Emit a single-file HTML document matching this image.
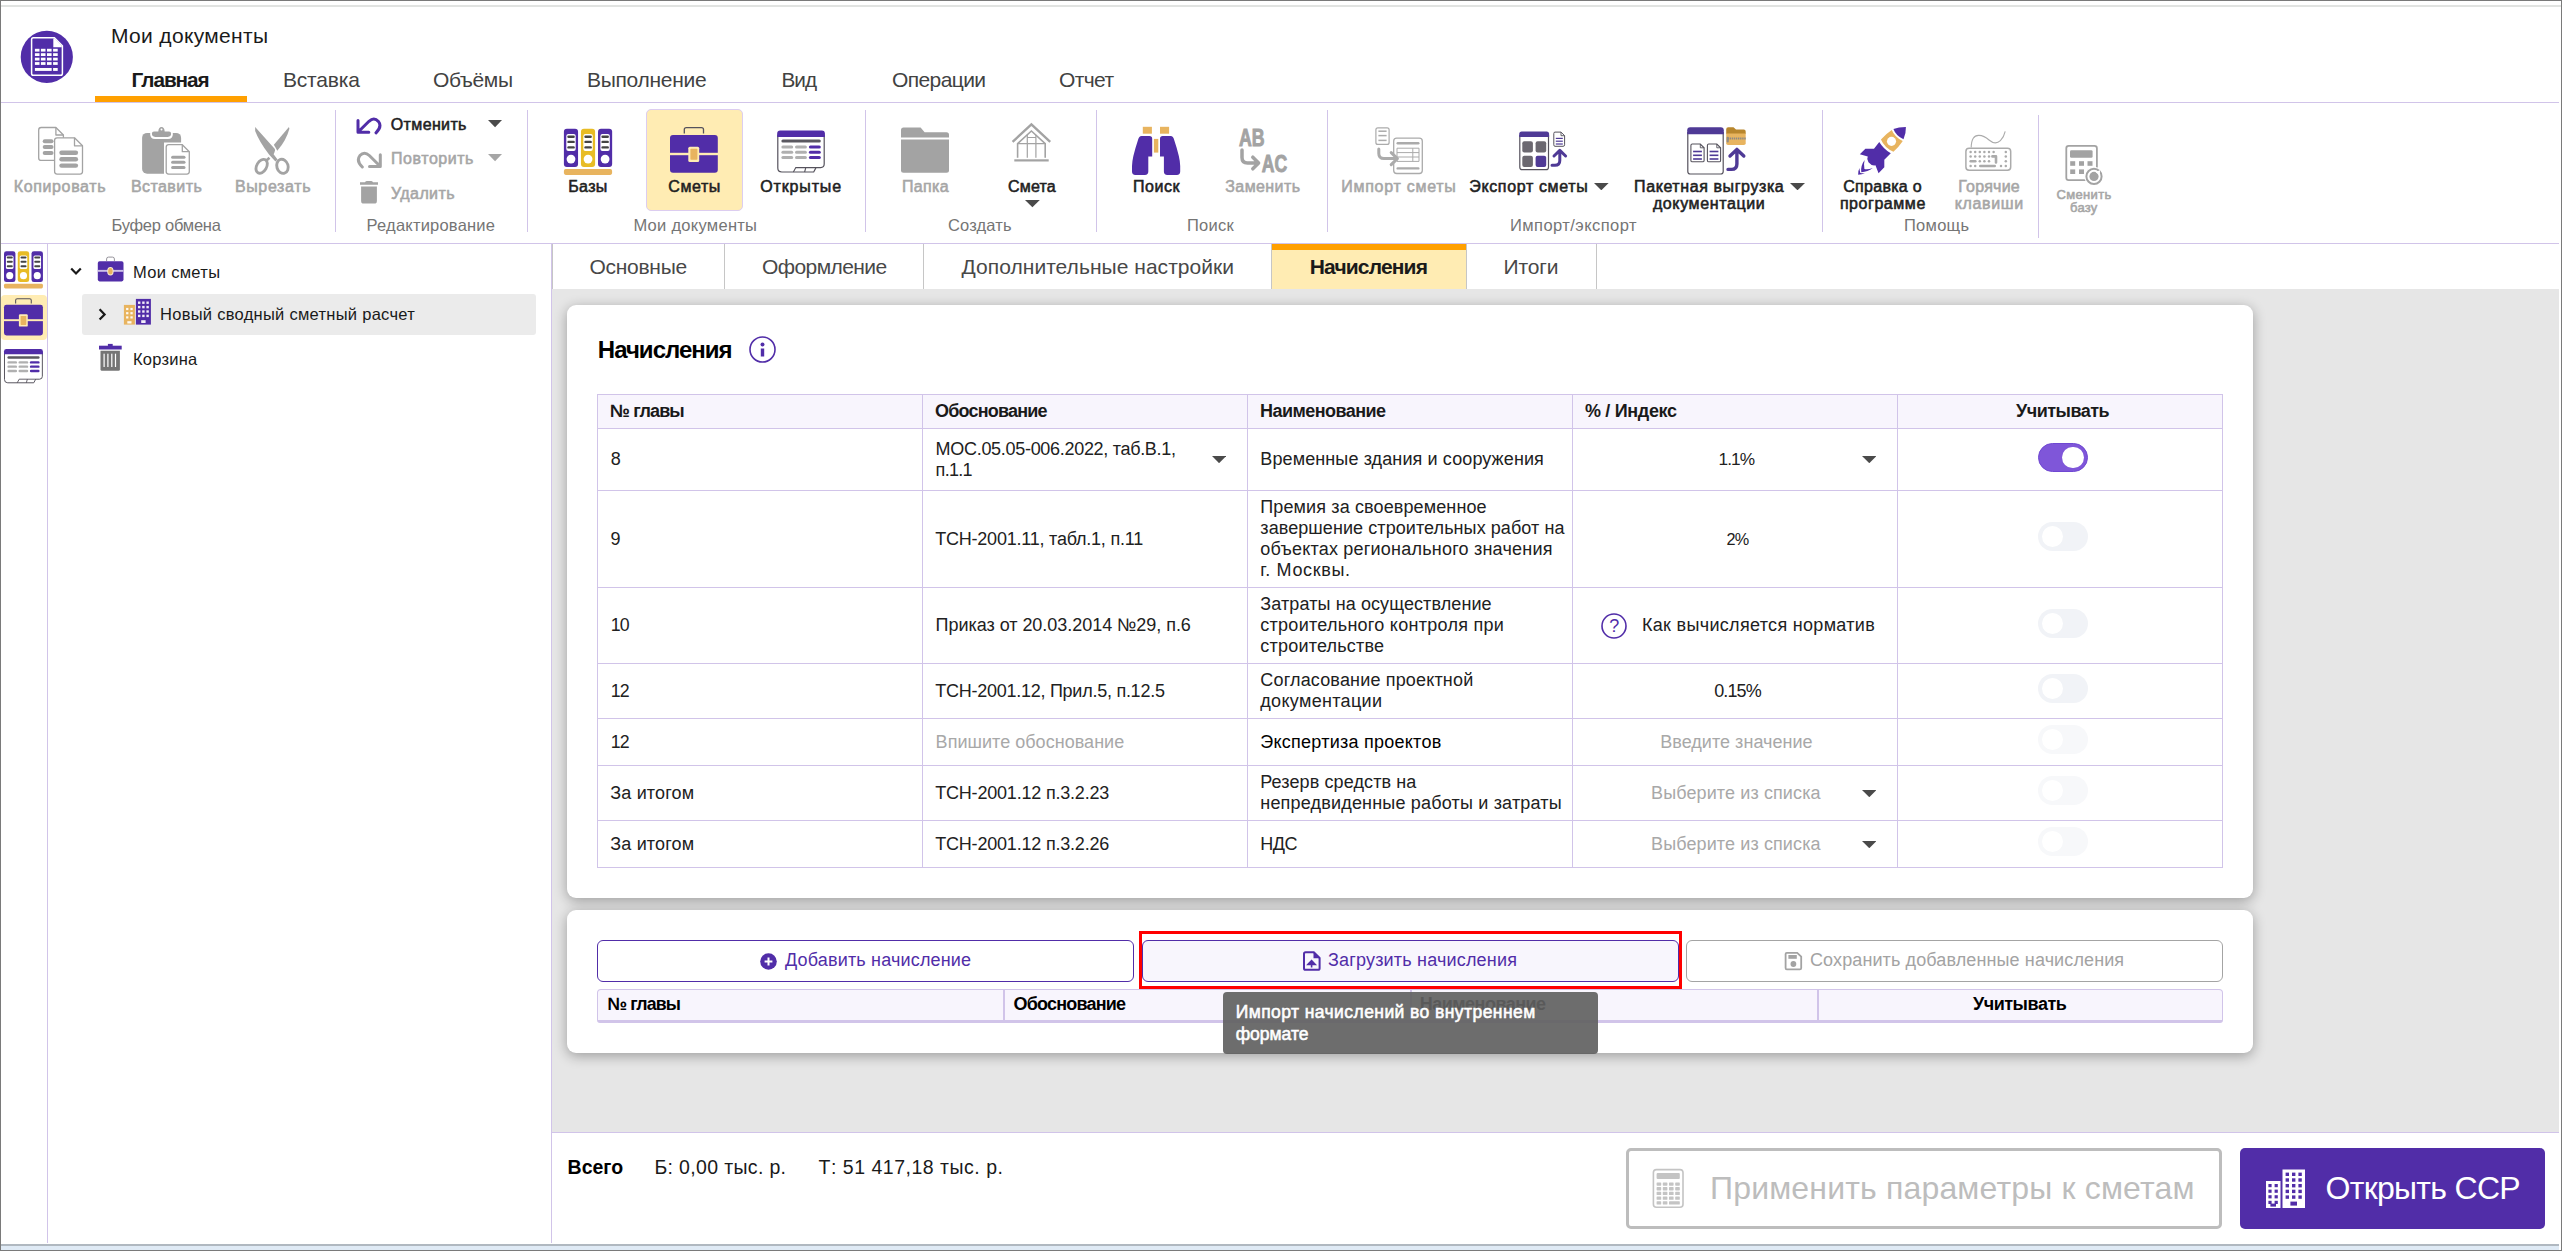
<!DOCTYPE html>
<html><head><meta charset="utf-8"><title>Мои документы</title>
<style>
html,body{margin:0;padding:0;}
body{width:2562px;height:1251px;position:relative;overflow:hidden;background:#fff;font-family:"Liberation Sans",sans-serif;}
.a{position:absolute;box-sizing:border-box;display:block;}
.t{position:absolute;white-space:nowrap;display:block;}
</style></head><body>
<div class="a" style="left:0.00px;top:0.00px;width:2562.00px;height:1251.00px;border:1px solid #7a7a7a;"></div>
<div class="a" style="left:1.00px;top:5.00px;width:2560.00px;height:2.00px;background:#e1e3e1;"></div>
<div class="a" style="left:1.00px;top:1244.00px;width:2558.00px;height:2.00px;background:#b0b8c0;"></div>
<div class="a" style="left:1.00px;top:1246.00px;width:2558.00px;height:4.00px;background:#dfeaf5;"></div>
<span class="t" style="left:111.00px;top:25px;font-size:21.00px;line-height:21.00px;letter-spacing:0.333px;color:#1a1a1a;">Мои документы</span>
<span class="t" style="left:131.60px;top:70px;font-size:20.75px;line-height:20.75px;letter-spacing:-1.050px;color:#1a1a1a;font-weight:bold;">Главная</span>
<div class="a" style="left:95.00px;top:96.00px;width:152.00px;height:6.00px;background:#ffa000;"></div>
<span class="t" style="left:283.00px;top:69px;font-size:21.00px;line-height:21.00px;letter-spacing:-0.208px;color:#424242;">Вставка</span>
<span class="t" style="left:433.00px;top:69px;font-size:21.00px;line-height:21.00px;letter-spacing:-0.400px;color:#424242;">Объёмы</span>
<span class="t" style="left:587.00px;top:69px;font-size:21.00px;line-height:21.00px;letter-spacing:-0.294px;color:#424242;">Выполнение</span>
<span class="t" style="left:781.50px;top:70px;font-size:20.75px;line-height:20.75px;letter-spacing:-1.000px;color:#424242;">Вид</span>
<span class="t" style="left:892.00px;top:69px;font-size:21.00px;line-height:21.00px;letter-spacing:-0.607px;color:#424242;">Операции</span>
<span class="t" style="left:1059.00px;top:69px;font-size:21.00px;line-height:21.00px;letter-spacing:-0.625px;color:#424242;">Отчет</span>
<div class="a" style="left:1.00px;top:102.00px;width:2558.00px;height:1.00px;background:#d1c4e9;"></div>
<div class="a" style="left:1.00px;top:243.00px;width:2558.00px;height:1.00px;background:#d1c4e9;"></div>
<div class="a" style="left:335.00px;top:110.00px;width:1.00px;height:122.00px;background:#d1c4e9;"></div>
<div class="a" style="left:527.00px;top:110.00px;width:1.00px;height:122.00px;background:#d1c4e9;"></div>
<div class="a" style="left:865.00px;top:110.00px;width:1.00px;height:122.00px;background:#d1c4e9;"></div>
<div class="a" style="left:1096.00px;top:110.00px;width:1.00px;height:122.00px;background:#d1c4e9;"></div>
<div class="a" style="left:1327.00px;top:110.00px;width:1.00px;height:122.00px;background:#d1c4e9;"></div>
<div class="a" style="left:1822.00px;top:110.00px;width:1.00px;height:122.00px;background:#d1c4e9;"></div>
<div class="a" style="left:2038.00px;top:115.00px;width:1.00px;height:123.00px;background:#d1c4e9;"></div>
<span class="t" style="left:111.50px;top:217px;font-size:16.50px;line-height:16.50px;letter-spacing:-0.250px;color:#757575;">Буфер обмена</span>
<span class="t" style="left:366.60px;top:217px;font-size:16.50px;line-height:16.50px;letter-spacing:0.204px;color:#757575;">Редактирование</span>
<span class="t" style="left:633.40px;top:217px;font-size:16.50px;line-height:16.50px;letter-spacing:0.279px;color:#757575;">Мои документы</span>
<span class="t" style="left:948.00px;top:217px;font-size:16.50px;line-height:16.50px;letter-spacing:0.158px;color:#757575;">Создать</span>
<span class="t" style="left:1187.00px;top:217px;font-size:16.50px;line-height:16.50px;letter-spacing:0.250px;color:#757575;">Поиск</span>
<span class="t" style="left:1510.00px;top:217px;font-size:16.50px;line-height:16.50px;letter-spacing:0.435px;color:#757575;">Импорт/экспорт</span>
<span class="t" style="left:1904.00px;top:217px;font-size:16.50px;line-height:16.50px;letter-spacing:0.250px;color:#757575;">Помощь</span>
<span class="t" style="left:13.68px;top:179px;font-size:16.00px;line-height:16.00px;letter-spacing:0.644px;color:#a6a6a6;-webkit-text-stroke:0.55px #a6a6a6;">Копировать</span>
<span class="t" style="left:130.88px;top:179px;font-size:16.00px;line-height:16.00px;letter-spacing:0.443px;color:#a6a6a6;-webkit-text-stroke:0.55px #a6a6a6;">Вставить</span>
<span class="t" style="left:234.88px;top:179px;font-size:16.00px;line-height:16.00px;letter-spacing:0.657px;color:#a6a6a6;-webkit-text-stroke:0.55px #a6a6a6;">Вырезать</span>
<span class="t" style="left:568.27px;top:179px;font-size:16.00px;line-height:16.00px;letter-spacing:0.350px;color:#212121;-webkit-text-stroke:0.55px #212121;">Базы</span>
<span class="t" style="left:760.27px;top:179px;font-size:16.00px;line-height:16.00px;letter-spacing:0.850px;color:#212121;-webkit-text-stroke:0.55px #212121;">Открытые</span>
<span class="t" style="left:901.88px;top:179px;font-size:16.00px;line-height:16.00px;letter-spacing:0.338px;color:#a6a6a6;-webkit-text-stroke:0.55px #a6a6a6;">Папка</span>
<span class="t" style="left:1007.98px;top:179px;font-size:16.00px;line-height:16.00px;letter-spacing:0.187px;color:#212121;-webkit-text-stroke:0.55px #212121;">Смета</span>
<span class="t" style="left:1132.88px;top:179px;font-size:16.00px;line-height:16.00px;letter-spacing:0.587px;color:#212121;-webkit-text-stroke:0.55px #212121;">Поиск</span>
<span class="t" style="left:1225.28px;top:179px;font-size:16.00px;line-height:16.00px;letter-spacing:0.407px;color:#a6a6a6;-webkit-text-stroke:0.55px #a6a6a6;">Заменить</span>
<span class="t" style="left:1341.28px;top:179px;font-size:16.00px;line-height:16.00px;letter-spacing:0.723px;color:#a6a6a6;-webkit-text-stroke:0.55px #a6a6a6;">Импорт сметы</span>
<span class="t" style="left:1469.28px;top:179px;font-size:16.00px;line-height:16.00px;letter-spacing:0.642px;color:#212121;-webkit-text-stroke:0.55px #212121;">Экспорт сметы</span>
<span class="t" style="left:1634.08px;top:179px;font-size:16.00px;line-height:16.00px;letter-spacing:0.587px;color:#212121;-webkit-text-stroke:0.55px #212121;">Пакетная выгрузка</span>
<span class="t" style="left:1843.28px;top:179px;font-size:16.00px;line-height:16.00px;letter-spacing:0.281px;color:#212121;-webkit-text-stroke:0.55px #212121;">Справка о</span>
<span class="t" style="left:1958.18px;top:179px;font-size:16.00px;line-height:16.00px;letter-spacing:0.258px;color:#a6a6a6;-webkit-text-stroke:0.55px #a6a6a6;">Горячие</span>
<span class="t" style="left:1652.88px;top:196px;font-size:16.00px;line-height:16.00px;letter-spacing:0.623px;color:#212121;-webkit-text-stroke:0.55px #212121;">документации</span>
<span class="t" style="left:1839.88px;top:196px;font-size:16.00px;line-height:16.00px;letter-spacing:0.556px;color:#212121;-webkit-text-stroke:0.55px #212121;">программе</span>
<span class="t" style="left:1954.78px;top:196px;font-size:16.00px;line-height:16.00px;letter-spacing:0.633px;color:#a6a6a6;-webkit-text-stroke:0.55px #a6a6a6;">клавиши</span>
<span class="t" style="left:2056.47px;top:188px;font-size:13.00px;line-height:13.00px;letter-spacing:0.350px;color:#a6a6a6;-webkit-text-stroke:0.55px #a6a6a6;">Сменить</span>
<span class="t" style="left:2070.08px;top:201px;font-size:13.00px;line-height:13.00px;letter-spacing:0.250px;color:#a6a6a6;-webkit-text-stroke:0.55px #a6a6a6;">базу</span>
<div class="a" style="left:646.00px;top:109.00px;width:97.00px;height:102.00px;background:#ffecb3;border:1px solid #dccdf0;border-radius:5px;"></div>
<span class="t" style="left:668.27px;top:179px;font-size:16.00px;line-height:16.00px;letter-spacing:0.575px;color:#212121;-webkit-text-stroke:0.55px #212121;">Сметы</span>
<span class="t" style="left:390.77px;top:117px;font-size:16.00px;line-height:16.00px;letter-spacing:0.364px;color:#212121;-webkit-text-stroke:0.55px #212121;">Отменить</span>
<span class="t" style="left:391.07px;top:151px;font-size:16.00px;line-height:16.00px;letter-spacing:0.531px;color:#a6a6a6;-webkit-text-stroke:0.55px #a6a6a6;">Повторить</span>
<span class="t" style="left:391.07px;top:186px;font-size:16.00px;line-height:16.00px;letter-spacing:0.392px;color:#a6a6a6;-webkit-text-stroke:0.55px #a6a6a6;">Удалить</span>
<svg class="a" style="left:488.40px;top:120.30px;" width="14.1" height="7.3" viewBox="0 0 14.1 7.3"><path d="M0 0H14.1 L7.05 7.3Z" fill="#4a4a4a"/></svg>
<svg class="a" style="left:488.40px;top:154.30px;" width="14.1" height="7.3" viewBox="0 0 14.1 7.3"><path d="M0 0H14.1 L7.05 7.3Z" fill="#a6a6a6"/></svg>
<svg class="a" style="left:1024.80px;top:200.40px;" width="14.8" height="7.2" viewBox="0 0 14.8 7.2"><path d="M0 0H14.8 L7.4 7.2Z" fill="#4a4a4a"/></svg>
<svg class="a" style="left:1594.00px;top:182.50px;" width="14.6" height="7.3" viewBox="0 0 14.6 7.3"><path d="M0 0H14.6 L7.3 7.3Z" fill="#4a4a4a"/></svg>
<svg class="a" style="left:1790.00px;top:182.50px;" width="15" height="7.3" viewBox="0 0 15 7.3"><path d="M0 0H15 L7.5 7.3Z" fill="#4a4a4a"/></svg>
<div class="a" style="left:47.00px;top:243.00px;width:1.00px;height:1000.00px;background:#d1c4e9;"></div>
<div class="a" style="left:1.00px;top:295.00px;width:46.00px;height:45.00px;background:#ffecb3;border-radius:4px;"></div>
<div class="a" style="left:82.00px;top:294.00px;width:454.00px;height:41.00px;background:#ebebeb;border-radius:3px;"></div>
<span class="t" style="left:133.00px;top:264px;font-size:16.50px;line-height:16.50px;letter-spacing:0.312px;color:#1a1a1a;">Мои сметы</span>
<span class="t" style="left:160.00px;top:306px;font-size:16.50px;line-height:16.50px;letter-spacing:0.276px;color:#1a1a1a;">Новый сводный сметный расчет</span>
<span class="t" style="left:133.00px;top:351px;font-size:16.50px;line-height:16.50px;letter-spacing:0.233px;color:#1a1a1a;">Корзина</span>
<svg class="a" style="left:69.50px;top:267.00px;" width="12" height="9" viewBox="0 0 12 9"><path d="M1.2 1.4L6 6.4L10.8 1.4" fill="none" stroke="#1a1a1a" stroke-width="2.2"/></svg>
<svg class="a" style="left:98.00px;top:308.00px;" width="9" height="13" viewBox="0 0 9 13"><path d="M1.6 1.2L6.6 6.4L1.6 11.6" fill="none" stroke="#1a1a1a" stroke-width="2.2"/></svg>
<div class="a" style="left:551.00px;top:243.00px;width:1.00px;height:1000.00px;background:#d1c4e9;"></div>
<div class="a" style="left:552.00px;top:289.00px;width:2007.00px;height:843.00px;background:#e6e6e6;"></div>
<div class="a" style="left:552.00px;top:244.00px;width:2007.00px;height:45.00px;background:#ffffff;"></div>
<div class="a" style="left:552.00px;top:244.00px;width:1.40px;height:45.00px;background:#c6c6c6;"></div>
<div class="a" style="left:724.00px;top:244.00px;width:1.40px;height:45.00px;background:#c6c6c6;"></div>
<div class="a" style="left:923.00px;top:244.00px;width:1.40px;height:45.00px;background:#c6c6c6;"></div>
<div class="a" style="left:1271.00px;top:244.00px;width:1.40px;height:45.00px;background:#c6c6c6;"></div>
<div class="a" style="left:1466.00px;top:244.00px;width:1.40px;height:45.00px;background:#c6c6c6;"></div>
<div class="a" style="left:1596.00px;top:244.00px;width:1.40px;height:45.00px;background:#c6c6c6;"></div>
<div class="a" style="left:1272.00px;top:244.00px;width:194.00px;height:45.00px;background:#ffecb3;"></div>
<div class="a" style="left:1272.00px;top:244.00px;width:194.00px;height:6.00px;background:#ffa000;"></div>
<span class="t" style="left:589.40px;top:256px;font-size:21.00px;line-height:21.00px;letter-spacing:-0.264px;color:#484848;">Основные</span>
<span class="t" style="left:762.00px;top:256px;font-size:21.00px;line-height:21.00px;letter-spacing:-0.583px;color:#484848;">Оформление</span>
<span class="t" style="left:961.60px;top:256px;font-size:21.00px;line-height:21.00px;letter-spacing:0.039px;color:#484848;">Дополнительные настройки</span>
<span class="t" style="left:1309.80px;top:256px;font-size:21.00px;line-height:21.00px;letter-spacing:-0.839px;color:#1a1a1a;font-weight:bold;">Начисления</span>
<span class="t" style="left:1503.50px;top:256px;font-size:21.00px;line-height:21.00px;letter-spacing:-0.125px;color:#484848;">Итоги</span>
<div class="a" style="left:567.00px;top:305.00px;width:1686.00px;height:593.00px;background:#fff;border-radius:9px;box-shadow:0 3px 13px rgba(0,0,0,.32);"></div>
<span class="t" style="left:597.80px;top:338px;font-size:24.00px;line-height:24.00px;letter-spacing:-0.983px;color:#000;font-weight:bold;">Начисления</span>
<svg class="a" style="left:748.00px;top:335.00px;" width="30" height="30" viewBox="0 0 30 30"><circle cx="14.5" cy="14.5" r="12.5" fill="none" stroke="#512da8" stroke-width="1.6"/><rect x="12.8" y="13.5" width="3.4" height="8" fill="#512da8"/><circle cx="14.5" cy="9.6" r="2" fill="#512da8"/></svg>
<div class="a" style="left:597.00px;top:394.00px;width:1626.00px;height:35.00px;background:#f8f5fd;"></div>
<div class="a" style="left:597.00px;top:394.00px;width:1626.00px;height:1.00px;background:#d1c4e9;"></div>
<div class="a" style="left:597.00px;top:428.00px;width:1626.00px;height:1.00px;background:#d1c4e9;"></div>
<div class="a" style="left:597.00px;top:490.00px;width:1626.00px;height:1.00px;background:#d1c4e9;"></div>
<div class="a" style="left:597.00px;top:587.00px;width:1626.00px;height:1.00px;background:#d1c4e9;"></div>
<div class="a" style="left:597.00px;top:663.00px;width:1626.00px;height:1.00px;background:#d1c4e9;"></div>
<div class="a" style="left:597.00px;top:718.00px;width:1626.00px;height:1.00px;background:#d1c4e9;"></div>
<div class="a" style="left:597.00px;top:765.00px;width:1626.00px;height:1.00px;background:#d1c4e9;"></div>
<div class="a" style="left:597.00px;top:820.00px;width:1626.00px;height:1.00px;background:#d1c4e9;"></div>
<div class="a" style="left:597.00px;top:867.00px;width:1626.00px;height:1.00px;background:#d1c4e9;"></div>
<div class="a" style="left:597.00px;top:394.00px;width:1.00px;height:474.00px;background:#d1c4e9;"></div>
<div class="a" style="left:922.00px;top:394.00px;width:1.00px;height:474.00px;background:#d1c4e9;"></div>
<div class="a" style="left:1247.00px;top:394.00px;width:1.00px;height:474.00px;background:#d1c4e9;"></div>
<div class="a" style="left:1572.00px;top:394.00px;width:1.00px;height:474.00px;background:#d1c4e9;"></div>
<div class="a" style="left:1897.00px;top:394.00px;width:1.00px;height:474.00px;background:#d1c4e9;"></div>
<div class="a" style="left:2222.00px;top:394.00px;width:1.00px;height:474.00px;background:#d1c4e9;"></div>
<span class="t" style="left:610.00px;top:402px;font-size:18.00px;line-height:18.00px;letter-spacing:-0.883px;color:#1a1a1a;font-weight:bold;">№ главы</span>
<span class="t" style="left:935.00px;top:402px;font-size:18.00px;line-height:18.00px;letter-spacing:-0.800px;color:#1a1a1a;font-weight:bold;">Обоснование</span>
<span class="t" style="left:1260.00px;top:402px;font-size:18.00px;line-height:18.00px;letter-spacing:-0.545px;color:#1a1a1a;font-weight:bold;">Наименование</span>
<span class="t" style="left:1585.00px;top:402px;font-size:18.00px;line-height:18.00px;letter-spacing:-0.333px;color:#1a1a1a;font-weight:bold;">% / Индекс</span>
<span class="t" style="left:2016.00px;top:402px;font-size:18.00px;line-height:18.00px;letter-spacing:-0.494px;color:#1a1a1a;font-weight:bold;">Учитывать</span>
<span class="t" style="left:610.70px;top:450px;font-size:18.00px;line-height:18.00px;letter-spacing:-1.400px;color:#212121;">8</span>
<span class="t" style="left:610.50px;top:530px;font-size:18.00px;line-height:18.00px;letter-spacing:-1.000px;color:#212121;">9</span>
<span class="t" style="left:610.80px;top:617px;font-size:17.75px;line-height:17.75px;letter-spacing:-0.950px;color:#212121;">10</span>
<span class="t" style="left:610.80px;top:683px;font-size:17.75px;line-height:17.75px;letter-spacing:-0.950px;color:#212121;">12</span>
<span class="t" style="left:610.80px;top:734px;font-size:17.75px;line-height:17.75px;letter-spacing:-0.950px;color:#212121;">12</span>
<span class="t" style="left:610.30px;top:784px;font-size:18.00px;line-height:18.00px;letter-spacing:0.150px;color:#212121;">За итогом</span>
<span class="t" style="left:610.30px;top:835px;font-size:18.00px;line-height:18.00px;letter-spacing:0.150px;color:#212121;">За итогом</span>
<span class="t" style="left:935.60px;top:440px;font-size:18.00px;line-height:18.00px;letter-spacing:-0.300px;color:#212121;">МОС.05.05-006.2022, таб.В.1,</span>
<span class="t" style="left:935.60px;top:461px;font-size:18.00px;line-height:18.00px;letter-spacing:-0.713px;color:#212121;">п.1.1</span>
<span class="t" style="left:935.20px;top:530px;font-size:18.00px;line-height:18.00px;letter-spacing:-0.219px;color:#212121;">ТСН-2001.11, табл.1, п.11</span>
<span class="t" style="left:935.60px;top:616px;font-size:18.00px;line-height:18.00px;letter-spacing:-0.039px;color:#212121;">Приказ от 20.03.2014 №29, п.6</span>
<span class="t" style="left:935.20px;top:682px;font-size:18.00px;line-height:18.00px;letter-spacing:-0.256px;color:#212121;">ТСН-2001.12, Прил.5, п.12.5</span>
<span class="t" style="left:935.60px;top:733px;font-size:18.00px;line-height:18.00px;letter-spacing:0.033px;color:#a8a8a8;">Впишите обоснование</span>
<span class="t" style="left:935.20px;top:784px;font-size:18.00px;line-height:18.00px;letter-spacing:-0.197px;color:#212121;">ТСН-2001.12 п.3.2.23</span>
<span class="t" style="left:935.20px;top:835px;font-size:18.00px;line-height:18.00px;letter-spacing:-0.197px;color:#212121;">ТСН-2001.12 п.3.2.26</span>
<span class="t" style="left:1260.30px;top:450px;font-size:18.00px;line-height:18.00px;letter-spacing:0.111px;color:#212121;">Временные здания и сооружения</span>
<span class="t" style="left:1260.30px;top:498px;font-size:18.00px;line-height:18.00px;letter-spacing:0.120px;color:#212121;">Премия за своевременное</span>
<span class="t" style="left:1260.30px;top:519px;font-size:18.00px;line-height:18.00px;letter-spacing:0.077px;color:#212121;">завершение строительных работ на</span>
<span class="t" style="left:1260.30px;top:540px;font-size:18.00px;line-height:18.00px;letter-spacing:0.215px;color:#212121;">объектах регионального значения</span>
<span class="t" style="left:1260.30px;top:561px;font-size:18.00px;line-height:18.00px;letter-spacing:0.633px;color:#212121;">г. Москвы.</span>
<span class="t" style="left:1260.30px;top:595px;font-size:18.00px;line-height:18.00px;letter-spacing:0.100px;color:#212121;">Затраты на осуществление</span>
<span class="t" style="left:1260.30px;top:616px;font-size:18.00px;line-height:18.00px;letter-spacing:0.270px;color:#212121;">строительного контроля при</span>
<span class="t" style="left:1260.30px;top:637px;font-size:18.00px;line-height:18.00px;letter-spacing:0.204px;color:#212121;">строительстве</span>
<span class="t" style="left:1260.30px;top:671px;font-size:18.00px;line-height:18.00px;letter-spacing:0.167px;color:#212121;">Согласование проектной</span>
<span class="t" style="left:1260.30px;top:692px;font-size:18.00px;line-height:18.00px;letter-spacing:0.314px;color:#212121;">документации</span>
<span class="t" style="left:1260.30px;top:733px;font-size:18.00px;line-height:18.00px;letter-spacing:0.250px;color:#000;">Экспертиза проектов</span>
<span class="t" style="left:1260.30px;top:773px;font-size:18.00px;line-height:18.00px;letter-spacing:0.106px;color:#212121;">Резерв средств на</span>
<span class="t" style="left:1260.30px;top:794px;font-size:18.00px;line-height:18.00px;letter-spacing:0.183px;color:#212121;">непредвиденные работы и затраты</span>
<span class="t" style="left:1260.30px;top:835px;font-size:18.00px;line-height:18.00px;letter-spacing:-0.525px;color:#212121;">НДС</span>
<span class="t" style="left:1718.50px;top:451px;font-size:17.25px;line-height:17.25px;letter-spacing:-0.883px;color:#212121;">1.1%</span>
<span class="t" style="left:1726.40px;top:531px;font-size:16.25px;line-height:16.25px;letter-spacing:-0.700px;color:#212121;">2%</span>
<span class="t" style="left:1642.00px;top:616px;font-size:18.00px;line-height:18.00px;letter-spacing:0.313px;color:#212121;">Как вычисляется норматив</span>
<span class="t" style="left:1714.20px;top:682px;font-size:18.00px;line-height:18.00px;letter-spacing:-0.875px;color:#212121;">0.15%</span>
<span class="t" style="left:1660.20px;top:733px;font-size:18.00px;line-height:18.00px;letter-spacing:0.043px;color:#a8a8a8;">Введите значение</span>
<span class="t" style="left:1651.10px;top:784px;font-size:18.00px;line-height:18.00px;letter-spacing:0.109px;color:#a8a8a8;">Выберите из списка</span>
<span class="t" style="left:1651.10px;top:835px;font-size:18.00px;line-height:18.00px;letter-spacing:0.109px;color:#a8a8a8;">Выберите из списка</span>
<svg class="a" style="left:1599.50px;top:611.50px;" width="28" height="28" viewBox="0 0 28 28"><circle cx="14" cy="14" r="12" fill="none" stroke="#512da8" stroke-width="1.6"/></svg>
<span class="t" style="left:1609.30px;top:617px;font-size:18.00px;line-height:18.00px;letter-spacing:-1.800px;color:#512da8;">?</span>
<svg class="a" style="left:1212.20px;top:456.00px;" width="14.2" height="7.2" viewBox="0 0 14.2 7.2"><path d="M0 0H14.2 L7.1 7.2Z" fill="#4a4a4a"/></svg>
<svg class="a" style="left:1861.60px;top:456.00px;" width="14.6" height="7.2" viewBox="0 0 14.6 7.2"><path d="M0 0H14.6 L7.3 7.2Z" fill="#4a4a4a"/></svg>
<svg class="a" style="left:1861.60px;top:790.00px;" width="14.6" height="7.2" viewBox="0 0 14.6 7.2"><path d="M0 0H14.6 L7.3 7.2Z" fill="#4a4a4a"/></svg>
<svg class="a" style="left:1861.60px;top:841.00px;" width="14.6" height="7.2" viewBox="0 0 14.6 7.2"><path d="M0 0H14.6 L7.3 7.2Z" fill="#4a4a4a"/></svg>
<div class="a" style="left:2037.90px;top:443.00px;width:50.20px;height:29.00px;background:#7f56d9;border-radius:14.5px;border:1px solid #6f48d2;"></div>
<div class="a" style="left:2062.30px;top:446.70px;width:21.60px;height:21.60px;background:#fff;border-radius:50%;"></div>
<div class="a" style="left:2037.90px;top:522.00px;width:50.30px;height:29.00px;background:#f1f3f7;border-radius:14.5px;"></div>
<div class="a" style="left:2041.60px;top:525.70px;width:21.60px;height:21.60px;background:#fff;border-radius:50%;"></div>
<div class="a" style="left:2037.90px;top:609.00px;width:50.30px;height:29.00px;background:#f1f3f7;border-radius:14.5px;"></div>
<div class="a" style="left:2041.60px;top:612.70px;width:21.60px;height:21.60px;background:#fff;border-radius:50%;"></div>
<div class="a" style="left:2037.90px;top:674.00px;width:50.30px;height:29.00px;background:#f1f3f7;border-radius:14.5px;"></div>
<div class="a" style="left:2041.60px;top:677.70px;width:21.60px;height:21.60px;background:#fff;border-radius:50%;"></div>
<div class="a" style="left:2037.90px;top:725.00px;width:50.30px;height:29.00px;background:#f7f8fa;border-radius:14.5px;"></div>
<div class="a" style="left:2041.60px;top:728.70px;width:21.60px;height:21.60px;background:#fff;border-radius:50%;"></div>
<div class="a" style="left:2037.90px;top:776.00px;width:50.30px;height:29.00px;background:#f7f8fa;border-radius:14.5px;"></div>
<div class="a" style="left:2041.60px;top:779.70px;width:21.60px;height:21.60px;background:#fff;border-radius:50%;"></div>
<div class="a" style="left:2037.90px;top:827.00px;width:50.30px;height:29.00px;background:#f7f8fa;border-radius:14.5px;"></div>
<div class="a" style="left:2041.60px;top:830.70px;width:21.60px;height:21.60px;background:#fff;border-radius:50%;"></div>
<div class="a" style="left:567.00px;top:910.00px;width:1686.00px;height:143.00px;background:#fff;border-radius:9px;box-shadow:0 3px 13px rgba(0,0,0,.32);"></div>
<div class="a" style="left:597.00px;top:940.00px;width:537.00px;height:41.80px;background:#fff;border:1.5px solid #512da8;border-radius:6px;"></div>
<div class="a" style="left:1142.00px;top:940.00px;width:537.00px;height:41.80px;background:#f8f6fd;border:1.5px solid #512da8;border-radius:6px;"></div>
<div class="a" style="left:1686.00px;top:940.00px;width:537.00px;height:41.80px;background:#fff;border:1.2px solid #a4a4a4;border-radius:6px;"></div>
<div class="a" style="left:1138.60px;top:930.60px;width:543.00px;height:58.60px;border:3px solid #f00;"></div>
<span class="t" style="left:785.00px;top:951px;font-size:18.00px;line-height:18.00px;letter-spacing:0.167px;color:#512da8;">Добавить начисление</span>
<span class="t" style="left:1328.00px;top:951px;font-size:18.00px;line-height:18.00px;letter-spacing:0.184px;color:#512da8;">Загрузить начисления</span>
<span class="t" style="left:1810.00px;top:951px;font-size:18.00px;line-height:18.00px;letter-spacing:0.113px;color:#a3a3a3;">Сохранить добавленные начисления</span>
<svg class="a" style="left:760.00px;top:952.50px;" width="17" height="17" viewBox="0 0 17 17"><circle cx="8.5" cy="8.5" r="8.3" fill="#512da8"/><path d="M8.5 4.6V12.4M4.6 8.5H12.4" stroke="#fff" stroke-width="2"/></svg>
<svg class="a" style="left:1302.00px;top:950.00px;" width="20" height="22" viewBox="0 0 20 22"><path d="M3.6 2.2H11.8L17.6 8V18.2Q17.6 19.8 16 19.8H3.6Q2 19.8 2 18.2V3.8Q2 2.2 3.6 2.2Z" fill="none" stroke="#512da8" stroke-width="2" stroke-linejoin="round"/><path d="M11.5 2.4V8.2H17.4Z" fill="#512da8"/><path d="M9.6 17.5V12.2M6 14.4L9.6 10.6L13.2 14.4Z" fill="#512da8" stroke="#512da8" stroke-width="1.6"/></svg>
<svg class="a" style="left:1784.00px;top:951.00px;" width="19" height="20" viewBox="0 0 19 20"><path d="M2.8 1.8H13.2L17.2 5.6V17Q17.2 18.4 15.8 18.4H2.8Q1.6 18.4 1.6 17V3Q1.6 1.8 2.8 1.8Z" fill="none" stroke="#a3a3a3" stroke-width="1.8"/><rect x="4.4" y="4" width="8.4" height="3.8" fill="#a3a3a3"/><circle cx="9.4" cy="13" r="2.9" fill="#a3a3a3"/></svg>
<div class="a" style="left:597.00px;top:989.00px;width:1626.00px;height:33.60px;background:#f8f5fd;border:1px solid #d1c4e9;border-bottom:3px solid #d1c4e9;border-radius:4px 4px 3px 3px;"></div>
<div class="a" style="left:1003.00px;top:990.00px;width:1.50px;height:29.50px;background:#d1c4e9;"></div>
<div class="a" style="left:1410.00px;top:990.00px;width:1.50px;height:29.50px;background:#d1c4e9;"></div>
<div class="a" style="left:1817.00px;top:990.00px;width:1.50px;height:29.50px;background:#d1c4e9;"></div>
<span class="t" style="left:607.40px;top:996px;font-size:17.75px;line-height:17.75px;letter-spacing:-0.900px;color:#000;font-weight:bold;">№ главы</span>
<span class="t" style="left:1013.50px;top:995px;font-size:18.00px;line-height:18.00px;letter-spacing:-0.800px;color:#000;font-weight:bold;">Обоснование</span>
<span class="t" style="left:1419.80px;top:995px;font-size:18.00px;line-height:18.00px;letter-spacing:-0.527px;color:#000;font-weight:bold;">Наименование</span>
<span class="t" style="left:1972.90px;top:995px;font-size:18.00px;line-height:18.00px;letter-spacing:-0.456px;color:#000;font-weight:bold;">Учитывать</span>
<div class="a" style="left:1223.00px;top:992.20px;width:374.70px;height:61.60px;background:rgba(97,97,97,.92);border-radius:4px;"></div>
<span class="t" style="left:1235.68px;top:1004px;font-size:17.50px;line-height:17.50px;letter-spacing:0.427px;color:#fff;-webkit-text-stroke:0.55px #fff;">Импорт начислений во внутреннем</span>
<span class="t" style="left:1235.68px;top:1026px;font-size:17.50px;line-height:17.50px;letter-spacing:-0.000px;color:#fff;-webkit-text-stroke:0.55px #fff;">формате</span>
<div class="a" style="left:552.00px;top:1131.50px;width:2007.00px;height:1.00px;background:#d1c4e9;"></div>
<div class="a" style="left:552.00px;top:1132.50px;width:2007.00px;height:111.50px;background:#fff;"></div>
<span class="t" style="left:567.60px;top:1158px;font-size:19.50px;line-height:19.50px;letter-spacing:-0.025px;color:#000;font-weight:bold;">Всего</span>
<span class="t" style="left:654.40px;top:1158px;font-size:19.50px;line-height:19.50px;letter-spacing:0.346px;color:#1a1a1a;">Б: 0,00 тыс. р.</span>
<span class="t" style="left:818.60px;top:1158px;font-size:19.50px;line-height:19.50px;letter-spacing:0.508px;color:#1a1a1a;">Т: 51 417,18 тыс. р.</span>
<div class="a" style="left:1626.00px;top:1148.00px;width:596.00px;height:81.00px;background:#fff;border:3px solid #bdbdbd;border-radius:5px;"></div>
<span class="t" style="left:1710.00px;top:1172px;font-size:32.00px;line-height:32.00px;letter-spacing:0.172px;color:#bdbdbd;">Применить параметры к сметам</span>
<div class="a" style="left:2240.00px;top:1148.00px;width:305.00px;height:81.00px;background:#512da8;border-radius:5px;"></div>
<span class="t" style="left:2325.50px;top:1172px;font-size:32.00px;line-height:32.00px;letter-spacing:-0.695px;color:#fff;">Открыть ССР</span>
<svg class="a" style="left:18.00px;top:28.00px;" width="58" height="58" viewBox="18 28 58 58"><circle cx="46.8" cy="56.9" r="26.1" fill="#512da8"/><path d="M33.3 37.8H54.4L62.4 45.8V73.4Q62.4 75.2 60.6 75.2H33.3Q31.6 75.2 31.6 73.4V39.6Q31.6 37.8 33.3 37.8Z" fill="none" stroke="#fff" stroke-width="1.5"/><path d="M53.3 38.6V47.3H61.8L61.8 45.9L54.5 38.6Z" fill="#fff"/><rect x="34.9" y="48.8" width="4.6" height="2.8" fill="#fff"/><rect x="40.9" y="48.8" width="4.6" height="2.8" fill="#fff"/><rect x="47" y="48.8" width="4.6" height="2.8" fill="#fff"/><rect x="53.1" y="48.8" width="4.6" height="2.8" fill="#fff"/><rect x="34.9" y="53.2" width="4.6" height="2.8" fill="#fff"/><rect x="40.9" y="53.2" width="4.6" height="2.8" fill="#fff"/><rect x="47" y="53.2" width="4.6" height="2.8" fill="#fff"/><rect x="53.1" y="53.2" width="4.6" height="2.8" fill="#fff"/><rect x="34.9" y="57.7" width="4.6" height="2.8" fill="#fff"/><rect x="40.9" y="57.7" width="4.6" height="2.8" fill="#fff"/><rect x="47" y="57.7" width="4.6" height="2.8" fill="#fff"/><rect x="53.1" y="57.7" width="4.6" height="2.8" fill="#fff"/><rect x="34.9" y="62.1" width="4.6" height="2.8" fill="#fff"/><rect x="40.9" y="62.1" width="4.6" height="2.8" fill="#fff"/><rect x="47" y="62.1" width="4.6" height="2.8" fill="#fff"/><rect x="53.1" y="62.1" width="4.6" height="2.8" fill="#fff"/><rect x="34.9" y="68" width="16.8" height="2.9" fill="#fff"/><rect x="53.1" y="68" width="4.6" height="2.9" fill="#fff"/></svg>
<svg class="a" style="left:36.00px;top:125.00px;" width="50" height="52" viewBox="36 125 50 52"><path d="M41.2 127.5H55.9L63.4 135V157.9Q63.4 160.4 60.9 160.4H41.2Q38.7 160.4 38.7 157.9V130Q38.7 127.5 41.2 127.5Z" fill="#fff" stroke="#a3a3a3" stroke-width="1.3" stroke-linejoin="round"/><path d="M55.9 127.5V135H63.4" fill="none" stroke="#a3a3a3" stroke-width="1.3" stroke-linejoin="round"/><rect x="42.7" y="139.2" width="10.8" height="4" rx="2" fill="#a3a3a3"/><rect x="42.7" y="145.1" width="10.8" height="4" rx="2" fill="#a3a3a3"/><rect x="42.7" y="151.1" width="10.8" height="4" rx="2" fill="#a3a3a3"/><path d="M57.1 137.8H74.5L82.5 145.8V171.6Q82.5 174.1 80 174.1H57.1Q54.6 174.1 54.6 171.6V140.3Q54.6 137.8 57.1 137.8Z" fill="#fff" stroke="#a3a3a3" stroke-width="1.3" stroke-linejoin="round"/><path d="M74.5 137.8V145.8H82.5" fill="none" stroke="#a3a3a3" stroke-width="1.3" stroke-linejoin="round"/><rect x="59.3" y="150.6" width="18.8" height="4.4" rx="2.2" fill="#a3a3a3"/><rect x="59.3" y="157" width="18.8" height="4.4" rx="2.2" fill="#a3a3a3"/><rect x="59.3" y="163.4" width="18.8" height="4.4" rx="2.2" fill="#a3a3a3"/></svg>
<svg class="a" style="left:140.00px;top:125.00px;" width="52" height="52" viewBox="140 125 52 52"><rect x="142.1" y="132.9" width="39" height="40.8" rx="5" fill="#a3a3a3"/><path d="M150.2 132.5H172.8V134.2Q172.8 139 168 139H155Q150.2 139 150.2 134.2Z" fill="#fff"/><path d="M154 131.5H158.3Q158.6 126.9 161.5 126.9Q164.4 126.9 164.7 131.5H169Q171.1 131.5 171.1 133.6Q171.1 136.9 167.8 136.9H155.2Q151.9 136.9 151.9 133.6Q151.9 131.5 154 131.5Z" fill="#a3a3a3"/><circle cx="161.5" cy="129.6" r="1" fill="#fff"/><rect x="164" y="142.5" width="28" height="34" fill="#fff"/><path d="M168.7 144.7H182.3L189.3 151.7V171.6Q189.3 174.1 186.8 174.1H168.7Q166.2 174.1 166.2 171.6V147.2Q166.2 144.7 168.7 144.7Z" fill="#fff" stroke="#a3a3a3" stroke-width="1.3" stroke-linejoin="round"/><path d="M182.3 144.7V151.7H189.3" fill="none" stroke="#a3a3a3" stroke-width="1.3" stroke-linejoin="round"/><rect x="171.1" y="155.7" width="14.4" height="3" rx="1.5" fill="#a3a3a3"/><rect x="171.1" y="160.8" width="14.4" height="3" rx="1.5" fill="#a3a3a3"/><rect x="171.1" y="166" width="14.4" height="3" rx="1.5" fill="#a3a3a3"/></svg>
<svg class="a" style="left:250.00px;top:124.00px;" width="46" height="54" viewBox="250 124 46 54"><g transform="translate(248 122) scale(0.044763)"><path d="M160 110L600 605Q612 640 590 680L572 720L660 835L612 885L470 725Q250 440 160 200Z" fill="#a3a3a3"/><path d="M915 110L578 508L655 642Q860 400 925 150Z" fill="#a3a3a3"/><path d="M395 875L480 800" stroke="#a3a3a3" stroke-width="58" fill="none"/><ellipse cx="305" cy="990" rx="110" ry="168" transform="rotate(30 305 990)" fill="none" stroke="#a3a3a3" stroke-width="64"/><ellipse cx="770" cy="990" rx="126" ry="160" transform="rotate(-17 770 990)" fill="none" stroke="#a3a3a3" stroke-width="64"/></g></svg>
<svg class="a" style="left:354.00px;top:115.00px;" width="30" height="21" viewBox="354 115 30 21"><path d="M358 120.6V132.2H368.8M358.4 131.8L369 121.3Q374 116.6 378.4 121.4Q382.4 126.6 376 132.8" fill="none" stroke="#512da8" stroke-width="3" stroke-linecap="round" stroke-linejoin="round"/></svg>
<svg class="a" style="left:354.00px;top:149.00px;" width="30" height="21" viewBox="354 149 30 21"><path d="M380.3 154.8V166.4H369.5M379.9 166L369.3 155.5Q364.3 150.8 359.9 155.6Q355.9 160.8 362.3 167" fill="none" stroke="#a3a3a3" stroke-width="3" stroke-linecap="round" stroke-linejoin="round"/></svg>
<svg class="a" style="left:358.00px;top:179.00px;" width="22" height="27" viewBox="358 179 22 27"><path d="M360 182.3H365Q365.6 181 367 181H371Q372.4 181 373 182.3H378V184.7H360Z" fill="#a3a3a3"/><path d="M361.1 186.4H376.9V201Q376.9 203.6 374.3 203.6H363.7Q361.1 203.6 361.1 201Z" fill="#a3a3a3"/></svg>
<svg class="a" style="left:562.00px;top:127.00px;" width="52" height="50" viewBox="562 127 52 50"><rect x="563.9" y="128.8" width="14.15" height="38.3" rx="3" fill="#512da8"/><rect x="566.3" y="134" width="9.4" height="17" rx="2" fill="#fff"/><rect x="567.3" y="135.5" width="7.5" height="2.4" rx="1.2" fill="#444"/><rect x="567.3" y="140.7" width="7.5" height="2.4" rx="1.2" fill="#444"/><rect x="567.3" y="146.2" width="7.5" height="2.4" rx="1.2" fill="#444"/><circle cx="571" cy="159.1" r="4.4" fill="#fff"/><rect x="580.95" y="128.8" width="14.15" height="38.3" rx="3" fill="#e8bc25"/><rect x="583.35" y="134" width="9.4" height="17" rx="2" fill="#fff"/><rect x="584.35" y="135.5" width="7.5" height="2.4" rx="1.2" fill="#444"/><rect x="584.35" y="140.7" width="7.5" height="2.4" rx="1.2" fill="#444"/><rect x="584.35" y="146.2" width="7.5" height="2.4" rx="1.2" fill="#444"/><circle cx="588.05" cy="159.1" r="4.4" fill="#fff"/><rect x="598" y="128.8" width="14.15" height="38.3" rx="3" fill="#512da8"/><rect x="600.4" y="134" width="9.4" height="17" rx="2" fill="#fff"/><rect x="601.4" y="135.5" width="7.5" height="2.4" rx="1.2" fill="#444"/><rect x="601.4" y="140.7" width="7.5" height="2.4" rx="1.2" fill="#444"/><rect x="601.4" y="146.2" width="7.5" height="2.4" rx="1.2" fill="#444"/><circle cx="605.1" cy="159.1" r="4.4" fill="#fff"/><rect x="563.9" y="169.1" width="48.2" height="5.8" rx="1.8" fill="#e8b45f"/></svg>
<svg class="a" style="left:2.00px;top:249.00px;" width="44" height="43" viewBox="2 249 44 43"><rect x="4" y="251.2" width="11.4191" height="30.9081" rx="2.421" fill="#512da8"/><rect x="5.9368" y="255.396" width="7.5858" height="13.719" rx="1.614" fill="#fff"/><rect x="6.7438" y="256.607" width="6.0525" height="1.9368" rx="0.9684" fill="#444"/><rect x="6.7438" y="260.803" width="6.0525" height="1.9368" rx="0.9684" fill="#444"/><rect x="6.7438" y="265.242" width="6.0525" height="1.9368" rx="0.9684" fill="#444"/><circle cx="9.7297" cy="275.652" r="3.5508" fill="#fff"/><rect x="17.7594" y="251.2" width="11.4191" height="30.9081" rx="2.421" fill="#e8bc25"/><rect x="19.6962" y="255.396" width="7.5858" height="13.719" rx="1.614" fill="#fff"/><rect x="20.5032" y="256.607" width="6.0525" height="1.9368" rx="0.9684" fill="#444"/><rect x="20.5032" y="260.803" width="6.0525" height="1.9368" rx="0.9684" fill="#444"/><rect x="20.5032" y="265.242" width="6.0525" height="1.9368" rx="0.9684" fill="#444"/><circle cx="23.4891" cy="275.652" r="3.5508" fill="#fff"/><rect x="31.5187" y="251.2" width="11.4191" height="30.9081" rx="2.421" fill="#512da8"/><rect x="33.4555" y="255.396" width="7.5858" height="13.719" rx="1.614" fill="#fff"/><rect x="34.2625" y="256.607" width="6.0525" height="1.9368" rx="0.9684" fill="#444"/><rect x="34.2625" y="260.803" width="6.0525" height="1.9368" rx="0.9684" fill="#444"/><rect x="34.2625" y="265.242" width="6.0525" height="1.9368" rx="0.9684" fill="#444"/><circle cx="37.2484" cy="275.652" r="3.5508" fill="#fff"/><rect x="4" y="283.722" width="38.8974" height="4.6806" rx="1.4526" fill="#e8b45f"/></svg>
<svg class="a" style="left:668.00px;top:125.00px;" width="52" height="50" viewBox="668 125 52 50"><path d="M684.3 133.5V129.6Q684.3 127.6 686.3 127.6H701.5Q703.5 127.6 703.5 129.6V133.5" fill="none" stroke="#55525c" stroke-width="1.3"/><rect x="670" y="135" width="47.8" height="37.8" rx="3" fill="#512da8"/><rect x="669" y="152.8" width="49.8" height="2.4" fill="#ffecb3"/><rect x="688.3" y="146.7" width="10.9" height="15.2" rx="1.5" fill="#ffecb3"/><rect x="690.4" y="148.8" width="7" height="11" rx="0.8" fill="#e8b45f"/></svg>
<svg class="a" style="left:2.00px;top:296.00px;" width="44" height="42" viewBox="2 296 44 42"><path d="M15.6402 303.491V300.316Q15.6402 298.688 17.2682 298.688H29.641Q31.269 298.688 31.269 300.316V303.491" fill="none" stroke="#55525c" stroke-width="1.0582"/><rect x="4" y="304.712" width="38.9092" height="30.7692" rx="2.442" fill="#512da8"/><rect x="3" y="319.201" width="40.9092" height="1.9536" fill="#ffecb3"/><rect x="18.8962" y="314.236" width="8.8726" height="12.3728" rx="1.221" fill="#ffecb3"/><rect x="20.6056" y="315.945" width="5.698" height="8.954" rx="0.6512" fill="#e8b45f"/></svg>
<svg class="a" style="left:775.00px;top:128.00px;" width="53" height="48" viewBox="775 128 53 48"><path d="M777.8 134.6V168.1Q777.8 172 781.8 172H813.7L816 167.6H820.7Q824.2 167.6 824.2 164.1V134.6" fill="#fff" stroke="#55525c" stroke-width="1.2"/><path d="M816 167.6H795.8L793.4 172M805.8 167.6L804.6 172" fill="none" stroke="#55525c" stroke-width="1.1"/><path d="M777.2 133.6Q777.2 130.6 780.2 130.6H821.9Q824.9 130.6 824.9 133.6V137.1H777.2Z" fill="#512da8"/><rect x="781.4" y="139.5" width="39.4" height="3" rx="1.5" fill="#5a5860"/><rect x="781.4" y="145.5" width="11.8" height="3" rx="1.5" fill="#b0b0b0"/><rect x="795" y="145.5" width="11.9" height="3" rx="1.5" fill="#b0b0b0"/><rect x="808.9" y="145.5" width="11.9" height="3" rx="1.5" fill="#512da8"/><rect x="781.4" y="150.7" width="11.8" height="3" rx="1.5" fill="#b0b0b0"/><rect x="795" y="150.7" width="11.9" height="3" rx="1.5" fill="#b0b0b0"/><rect x="808.9" y="150.7" width="11.9" height="3" rx="1.5" fill="#512da8"/><rect x="781.4" y="156.1" width="11.8" height="3" rx="1.5" fill="#b0b0b0"/><rect x="795" y="156.1" width="11.9" height="3" rx="1.5" fill="#b0b0b0"/><rect x="808.9" y="156.1" width="11.9" height="3" rx="1.5" fill="#512da8"/></svg>
<svg class="a" style="left:2.00px;top:347.00px;" width="44" height="39" viewBox="2 347 44 39"><path d="M4.4896 352.264V379.6Q4.4896 382.782 7.7536 382.782H33.784L35.6608 379.192H39.496Q42.352 379.192 42.352 376.336V352.264" fill="#fff" stroke="#55525c" stroke-width="0.9792"/><path d="M35.6608 379.192H19.1776L17.2192 382.782M27.3376 379.192L26.3584 382.782" fill="none" stroke="#55525c" stroke-width="0.8976"/><path d="M4 351.448Q4 349 6.448 349H40.4752Q42.9232 349 42.9232 351.448V354.304H4Z" fill="#512da8"/><rect x="7.4272" y="356.262" width="32.1504" height="2.448" rx="1.224" fill="#5a5860"/><rect x="7.4272" y="361.158" width="9.6288" height="2.448" rx="1.224" fill="#b0b0b0"/><rect x="18.5248" y="361.158" width="9.7104" height="2.448" rx="1.224" fill="#b0b0b0"/><rect x="29.8672" y="361.158" width="9.7104" height="2.448" rx="1.224" fill="#512da8"/><rect x="7.4272" y="365.402" width="9.6288" height="2.448" rx="1.224" fill="#b0b0b0"/><rect x="18.5248" y="365.402" width="9.7104" height="2.448" rx="1.224" fill="#b0b0b0"/><rect x="29.8672" y="365.402" width="9.7104" height="2.448" rx="1.224" fill="#512da8"/><rect x="7.4272" y="369.808" width="9.6288" height="2.448" rx="1.224" fill="#b0b0b0"/><rect x="18.5248" y="369.808" width="9.7104" height="2.448" rx="1.224" fill="#b0b0b0"/><rect x="29.8672" y="369.808" width="9.7104" height="2.448" rx="1.224" fill="#512da8"/></svg>
<svg class="a" style="left:899.00px;top:125.00px;" width="52" height="50" viewBox="899 125 52 50"><path d="M903.5 127.5H920.6L924.6 132.3H946.5Q949 132.3 949 134.8V137.4H901V130Q901 127.5 903.5 127.5Z" fill="#a3a3a3"/><path d="M901 139.5H949V170.2Q949 172.7 946.5 172.7H903.5Q901 172.7 901 170.2Z" fill="#a3a3a3"/></svg>
<svg class="a" style="left:1009.00px;top:121.00px;" width="45" height="43" viewBox="1009 121 45 43"><path d="M1012.6 141.8L1031.4 124.4L1050.2 141.8" fill="none" stroke="#a3a3a3" stroke-width="2.4"/><path d="M1017.6 157.8V143.6L1031.4 131L1045.2 143.6V157.8" fill="none" stroke="#a3a3a3" stroke-width="1.6"/><path d="M1017.6 143.6H1045.2M1027.3 134.8V157.8M1035.9 134.8V157.8M1027.3 137.5H1035.9" fill="none" stroke="#a3a3a3" stroke-width="1.2"/><rect x="1014.3" y="159.3" width="34.4" height="2.2" fill="#a3a3a3"/></svg>
<svg class="a" style="left:1130.00px;top:125.00px;" width="53" height="52" viewBox="1130 125 53 52"><rect x="1142.8" y="126.8" width="9.1" height="6.9" fill="#e8b45f"/><rect x="1160" y="126.8" width="9.1" height="6.9" fill="#e8b45f"/><rect x="1153.9" y="138.9" width="4.4" height="13.7" fill="#e8b45f"/><path d="M1141.5 136.1H1149.5Q1152.2 136.1 1152.2 138.8V156.4H1148.3V171.5Q1148.3 174.9 1144.9 174.9H1135.4Q1132 174.9 1132 171.5V166Q1132 158 1138 140Q1139 136.1 1141.5 136.1Z" fill="#512da8"/><path d="M1170.7 136.1H1162.7Q1160 136.1 1160 138.8V156.4H1163.9V171.5Q1163.9 174.9 1167.3 174.9H1176.8Q1180.2 174.9 1180.2 171.5V166Q1180.2 158 1174.2 140Q1173.2 136.1 1170.7 136.1Z" fill="#512da8"/></svg>
<svg class="a" style="left:1236.00px;top:125.00px;" width="54" height="52" viewBox="1236 125 54 52"><text x="1239" y="146.4" font-family="Liberation Sans" font-weight="bold" font-size="24.5" textLength="25.6" lengthAdjust="spacingAndGlyphs" stroke="#a3a3a3" stroke-width="1" fill="#a3a3a3">AB</text><text x="1261.8" y="171.8" font-family="Liberation Sans" font-weight="bold" font-size="24.5" textLength="25.4" lengthAdjust="spacingAndGlyphs" stroke="#a3a3a3" stroke-width="1" fill="#a3a3a3">AC</text><path d="M1242 150V157.5Q1242 163 1247.5 163H1258M1252.8 157.2L1258.6 163L1252.8 168.8" fill="none" stroke="#a3a3a3" stroke-width="3.5" stroke-linecap="round" stroke-linejoin="round"/></svg>
<svg class="a" style="left:1373.00px;top:125.00px;" width="52" height="52" viewBox="1373 125 52 52"><rect x="1375.9" y="127.8" width="13.2" height="16.6" rx="2" fill="#fff" stroke="#ababab" stroke-width="1.2"/><rect x="1378.4" y="130.45" width="8.2" height="1.5" fill="#ababab"/><rect x="1378.4" y="134.85" width="8.2" height="1.5" fill="#ababab"/><rect x="1378.4" y="139.65" width="8.2" height="1.5" fill="#ababab"/><rect x="1393.7" y="138.1" width="28.6" height="35.4" rx="3" fill="#fff" stroke="#ababab" stroke-width="1.3"/><rect x="1396.5" y="142" width="23" height="2.4" rx="1.2" fill="#ababab"/><rect x="1396.5" y="167.2" width="23" height="2.4" rx="1.2" fill="#ababab"/><path d="M1397 148.2H1419V161.4H1397ZM1397 152.6H1419M1397 157H1419M1412.8 148.2V161.4" fill="none" stroke="#ababab" stroke-width="1"/><path d="M1378.8 149V153.5Q1378.8 158.6 1384 158.6H1395" fill="none" stroke="#fff" stroke-width="5.5" stroke-linecap="round"/><path d="M1378.8 149V153.5Q1378.8 158.6 1384 158.6H1396M1391.2 152.6L1397.4 158.6L1391.2 164.6" fill="none" stroke="#ababab" stroke-width="3" stroke-linecap="round" stroke-linejoin="round"/></svg>
<svg class="a" style="left:1517.00px;top:129.00px;" width="53" height="44" viewBox="1517 129 53 44"><path d="M1519.8 135V167.2Q1519.8 169.7 1522.3 169.7H1546Q1548.5 169.7 1548.5 167.2V135" fill="#fff" stroke="#55525c" stroke-width="1.2"/><path d="M1519.2 137.1V134Q1519.2 131.5 1521.7 131.5H1546.6Q1549.1 131.5 1549.1 134V137.1Z" fill="#4f3a96"/><rect x="1522.3" y="141.2" width="10.6" height="11.3" rx="2" fill="#6b6870"/><rect x="1535.6" y="141.2" width="10.6" height="11.3" rx="2" fill="#6b6870"/><rect x="1522.3" y="155.8" width="10.6" height="11.3" rx="2" fill="#6b6870"/><rect x="1535.6" y="155.8" width="10.6" height="11.3" rx="2" fill="#4f3a96"/><path d="M1555 132.1H1561L1564.6 135.7V144.8Q1564.6 146.3 1563.1 146.3H1555Q1553.8 146.3 1553.8 144.8V133.5Q1553.8 132.1 1555 132.1Z" fill="#fff" stroke="#55525c" stroke-width="1"/><path d="M1561 132.1V135.7H1564.6" fill="none" stroke="#55525c" stroke-width="0.9"/><rect x="1555.8" y="137.8" width="7" height="1.2" fill="#4f3a96"/><rect x="1555.8" y="140.6" width="7" height="1.2" fill="#4f3a96"/><rect x="1555.8" y="143.4" width="7" height="1.2" fill="#4f3a96"/><path d="M1552 165.2H1555Q1559.8 165.2 1559.8 160.4V151.5M1554 156L1559.8 150.4L1565.6 156" fill="none" stroke="#4f3a96" stroke-width="3" stroke-linecap="round" stroke-linejoin="round"/></svg>
<svg class="a" style="left:1685.00px;top:125.00px;" width="64" height="52" viewBox="1685 125 64 52"><path d="M1687.8 132V171.5Q1687.8 174 1690.3 174H1720.7Q1723.2 174 1723.2 171.5V132" fill="#fff" stroke="#55525c" stroke-width="1.2"/><path d="M1687.2 134.3V130.2Q1687.2 127.2 1690.2 127.2H1720.8Q1723.8 127.2 1723.8 130.2V134.3Z" fill="#4f3a96"/><path d="M1692.3 144H1700.3L1704.1 147.8V160.4Q1704.1 161.8 1702.7 161.8H1692.3Q1690.9 161.8 1690.9 160.4V145.4Q1690.9 144 1692.3 144Z" fill="#fff" stroke="#55525c" stroke-width="1.1"/><path d="M1700.3 144V147.8H1704.1" fill="none" stroke="#55525c" stroke-width="0.9"/><rect x="1693.1" y="150.7" width="8.8" height="1.6" fill="#4f3a96"/><rect x="1693.1" y="154.5" width="8.8" height="1.6" fill="#4f3a96"/><rect x="1693.1" y="158.2" width="8.8" height="1.6" fill="#4f3a96"/><path d="M1708.8 144H1716.8L1720.6 147.8V160.4Q1720.6 161.8 1719.2 161.8H1708.8Q1707.4 161.8 1707.4 160.4V145.4Q1707.4 144 1708.8 144Z" fill="#fff" stroke="#55525c" stroke-width="1.1"/><path d="M1716.8 144V147.8H1720.6" fill="none" stroke="#55525c" stroke-width="0.9"/><rect x="1709.6" y="150.7" width="8.8" height="1.6" fill="#4f3a96"/><rect x="1709.6" y="154.5" width="8.8" height="1.6" fill="#4f3a96"/><rect x="1709.6" y="158.2" width="8.8" height="1.6" fill="#4f3a96"/><path d="M1726.2 129.2Q1726.2 127.2 1728.2 127.2H1733.5L1736 129.6H1743.8Q1745.7 129.6 1745.7 131.5V134H1726.2Z" fill="#b8862d"/><path d="M1726.2 133.4H1745.7V143.2Q1745.7 145 1743.9 145H1728Q1726.2 145 1726.2 143.2Z" fill="#e8b45f"/><path d="M1727.5 138.4H1745.7" stroke="#8d8a86" stroke-width="2" stroke-dasharray="1.4 0.7" fill="none"/><rect x="1726.6" y="136.8" width="2.2" height="5.6" rx="1" fill="#8d8a86"/><path d="M1728 169.4H1731.5Q1736.9 169.4 1736.9 164V151M1730 156L1736.9 149.4L1743.8 156" fill="none" stroke="#4f3a96" stroke-width="3.4" stroke-linecap="round" stroke-linejoin="round"/></svg>
<svg class="a" style="left:1855.00px;top:124.00px;" width="55" height="54" viewBox="1855 124 55 54"><g transform="translate(1850 120) scale(0.047985)"><path d="M610 460Q700 610 850 695L715 830V985L595 1110L530 945Q450 960 385 880Q340 820 370 760L205 715L320 600H500Z" fill="#512da8"/><path d="M870 210Q935 365 1100 440Q1020 565 905 660Q720 580 645 405Q745 295 870 210Z" fill="#e8b45f"/><circle cx="865" cy="445" r="95" fill="#fff"/><path d="M1165 148Q1010 150 905 190Q960 340 1115 400Q1170 280 1165 148Z" fill="#512da8"/><path d="M305 835Q215 960 235 1090Q370 1080 475 1000Q370 1035 300 1020Q280 930 305 835Z" fill="#512da8"/><path d="M200 1000Q160 1070 170 1140Q250 1140 310 1110Q255 1115 215 1105Q195 1050 200 1000Z" fill="#512da8"/></g></svg>
<svg class="a" style="left:1963.00px;top:129.00px;" width="51" height="44" viewBox="1963 129 51 44"><rect x="1965.9" y="148.3" width="44.8" height="22" rx="3.2" fill="#fff" stroke="#ababab" stroke-width="1.5"/><path d="M1971.2 147.6Q1971.4 135 1979 135.4Q1984 135.6 1989 140Q1995.4 145.4 2000.4 140.6Q2004 137 2005.2 131.4" fill="none" stroke="#ababab" stroke-width="1.1"/><circle cx="1970.6" cy="152" r="1.25" fill="#ababab"/><circle cx="1975.2" cy="152" r="1.25" fill="#ababab"/><circle cx="1979.8" cy="152" r="1.25" fill="#ababab"/><circle cx="1984.4" cy="152" r="1.25" fill="#ababab"/><circle cx="1989" cy="152" r="1.25" fill="#ababab"/><circle cx="1993.6" cy="152" r="1.25" fill="#ababab"/><circle cx="2005.8" cy="152" r="1.25" fill="#ababab"/><circle cx="1970.6" cy="156.6" r="1.25" fill="#ababab"/><circle cx="1975.2" cy="156.6" r="1.25" fill="#ababab"/><circle cx="1979.8" cy="156.6" r="1.25" fill="#ababab"/><circle cx="1984.4" cy="156.6" r="1.25" fill="#ababab"/><circle cx="1989" cy="156.6" r="1.25" fill="#ababab"/><circle cx="2005.8" cy="156.6" r="1.25" fill="#ababab"/><circle cx="1979.8" cy="161.3" r="1.25" fill="#ababab"/><circle cx="1984.4" cy="161.3" r="1.25" fill="#ababab"/><circle cx="1989" cy="161.3" r="1.25" fill="#ababab"/><circle cx="2005.8" cy="161.3" r="1.25" fill="#ababab"/><circle cx="1970.6" cy="166" r="1.25" fill="#ababab"/><circle cx="1975.2" cy="166" r="1.25" fill="#ababab"/><circle cx="2001" cy="166" r="1.25" fill="#ababab"/><circle cx="2005.8" cy="166" r="1.25" fill="#ababab"/><rect x="1969.4" y="160.05" width="7.2" height="2.5" rx="1.25" fill="#ababab"/><rect x="1979" y="164.75" width="17" height="2.5" rx="1.25" fill="#ababab"/><path d="M1992.4 156.4H1996V162.4" fill="none" stroke="#ababab" stroke-width="2.6" stroke-linejoin="round" stroke-linecap="round"/></svg>
<svg class="a" style="left:2063.00px;top:143.00px;" width="43" height="45" viewBox="2063 143 43 45"><rect x="2066.3" y="145.9" width="30.6" height="34.2" rx="2.4" fill="#fff" stroke="#a3a3a3" stroke-width="1.8"/><rect x="2070" y="150.2" width="22.6" height="7.6" rx="1.4" fill="#a3a3a3"/><rect x="2070.2" y="161.2" width="5" height="4.6" fill="#a3a3a3"/><rect x="2079" y="161.2" width="5" height="4.6" fill="#a3a3a3"/><rect x="2087.5" y="161.2" width="5" height="4.6" fill="#a3a3a3"/><rect x="2070.2" y="169.4" width="5" height="4.6" fill="#a3a3a3"/><rect x="2079" y="169.4" width="5" height="4.6" fill="#a3a3a3"/><rect x="2087.5" y="169.4" width="5" height="4.6" fill="#a3a3a3"/><circle cx="2094" cy="176.4" r="9.7" fill="#fff"/><circle cx="2094" cy="176.4" r="7.6" fill="none" stroke="#a3a3a3" stroke-width="2"/><circle cx="2094" cy="176.4" r="4.6" fill="#a3a3a3"/><path d="M2095.6 172.2L2100.2 170L2099.6 175.2Z" fill="#fff"/></svg>
<svg class="a" style="left:96.00px;top:255.00px;" width="30" height="28" viewBox="96 255 30 28"><path d="M106.6 261V259Q106.6 257.1 108.5 257.1H112.5Q114.4 257.1 114.4 259V261" fill="none" stroke="#8a8890" stroke-width="0.9"/><rect x="97.8" y="261.2" width="25.7" height="20.2" rx="1.8" fill="#512da8"/><rect x="97.8" y="269.9" width="25.7" height="1.9" fill="#cbbfe8"/><ellipse cx="110.4" cy="271.2" rx="3.2" ry="4.3" fill="#f5e9d2"/><ellipse cx="110.4" cy="271.2" rx="2.2" ry="3.3" fill="#e8b45f"/></svg>
<svg class="a" style="left:122.00px;top:297.00px;" width="31" height="30" viewBox="122 297 31 30"><rect x="123.9" y="304.9" width="11" height="19.7" fill="#e8b45f"/><rect x="126.1" y="307.9" width="2.3" height="2.2" fill="#fff" opacity=".92"/><rect x="130.4" y="307.9" width="2.3" height="2.2" fill="#fff" opacity=".92"/><rect x="126.1" y="312.1" width="2.3" height="2.2" fill="#fff" opacity=".92"/><rect x="130.4" y="312.1" width="2.3" height="2.2" fill="#fff" opacity=".92"/><rect x="126.1" y="316.3" width="2.3" height="2.2" fill="#fff" opacity=".92"/><rect x="130.4" y="316.3" width="2.3" height="2.2" fill="#fff" opacity=".92"/><rect x="127.3" y="321.2" width="4.2" height="2.3" fill="#fff" opacity=".92"/><rect x="135.9" y="298.9" width="15" height="25.7" fill="#512da8"/><rect x="138" y="301.5" width="2.4" height="2.4" fill="#fff" opacity=".92"/><rect x="142.2" y="301.5" width="2.4" height="2.4" fill="#fff" opacity=".92"/><rect x="146.4" y="301.5" width="2.4" height="2.4" fill="#fff" opacity=".92"/><rect x="138" y="305.9" width="2.4" height="2.4" fill="#fff" opacity=".92"/><rect x="142.2" y="305.9" width="2.4" height="2.4" fill="#fff" opacity=".92"/><rect x="146.4" y="305.9" width="2.4" height="2.4" fill="#fff" opacity=".92"/><rect x="138" y="310.3" width="2.4" height="2.4" fill="#fff" opacity=".92"/><rect x="142.2" y="310.3" width="2.4" height="2.4" fill="#fff" opacity=".92"/><rect x="146.4" y="310.3" width="2.4" height="2.4" fill="#fff" opacity=".92"/><rect x="138" y="314.7" width="2.4" height="2.4" fill="#fff" opacity=".92"/><rect x="142.2" y="314.7" width="2.4" height="2.4" fill="#fff" opacity=".92"/><rect x="146.4" y="314.7" width="2.4" height="2.4" fill="#fff" opacity=".92"/><rect x="141.2" y="320.2" width="4.4" height="2.8" fill="#fff" opacity=".92"/></svg>
<svg class="a" style="left:97.00px;top:342.00px;" width="27" height="31" viewBox="97 342 27 31"><rect x="107.9" y="343.9" width="4.8" height="2.4" fill="#512da8"/><rect x="99" y="345.7" width="22.7" height="3.8" fill="#512da8"/><path d="M100.5 350.7H119.9V369.4Q119.9 370.8 118.5 370.8H101.9Q100.5 370.8 100.5 369.4Z" fill="#757575"/><rect x="103.5" y="353.7" width="1.2" height="13.3" fill="#fff"/><rect x="107.3" y="353.7" width="1.2" height="13.3" fill="#fff"/><rect x="111.2" y="353.7" width="1.2" height="13.3" fill="#fff"/><rect x="114.9" y="353.7" width="1.2" height="13.3" fill="#fff"/></svg>
<svg class="a" style="left:1651.00px;top:1167.00px;" width="35" height="43" viewBox="1651 1167 35 43"><rect x="1653.4" y="1169.6" width="29.6" height="37.6" rx="3" fill="#fff" stroke="#c4c4c4" stroke-width="1.6"/><rect x="1656.6" y="1173" width="23.2" height="6" rx="1" fill="#c4c4c4"/><rect x="1656.6" y="1182.4" width="4.6" height="3.3" rx="0.6" fill="#c4c4c4"/><rect x="1662.8" y="1182.4" width="4.6" height="3.3" rx="0.6" fill="#c4c4c4"/><rect x="1669" y="1182.4" width="4.6" height="3.3" rx="0.6" fill="#c4c4c4"/><rect x="1675.2" y="1182.4" width="4.6" height="3.3" rx="0.6" fill="#c4c4c4"/><rect x="1656.6" y="1187.1" width="4.6" height="3.3" rx="0.6" fill="#c4c4c4"/><rect x="1662.8" y="1187.1" width="4.6" height="3.3" rx="0.6" fill="#c4c4c4"/><rect x="1669" y="1187.1" width="4.6" height="3.3" rx="0.6" fill="#c4c4c4"/><rect x="1675.2" y="1187.1" width="4.6" height="3.3" rx="0.6" fill="#c4c4c4"/><rect x="1656.6" y="1191.8" width="4.6" height="3.3" rx="0.6" fill="#c4c4c4"/><rect x="1662.8" y="1191.8" width="4.6" height="3.3" rx="0.6" fill="#c4c4c4"/><rect x="1669" y="1191.8" width="4.6" height="3.3" rx="0.6" fill="#c4c4c4"/><rect x="1675.2" y="1191.8" width="4.6" height="3.3" rx="0.6" fill="#c4c4c4"/><rect x="1656.6" y="1196.5" width="4.6" height="3.3" rx="0.6" fill="#c4c4c4"/><rect x="1662.8" y="1196.5" width="4.6" height="3.3" rx="0.6" fill="#c4c4c4"/><rect x="1669" y="1196.5" width="4.6" height="3.3" rx="0.6" fill="#c4c4c4"/><rect x="1675.2" y="1196.5" width="4.6" height="3.3" rx="0.6" fill="#c4c4c4"/><rect x="1656.6" y="1201.2" width="4.6" height="3.3" rx="0.6" fill="#c4c4c4"/><rect x="1662.8" y="1201.2" width="4.6" height="3.3" rx="0.6" fill="#c4c4c4"/><rect x="1669" y="1201.2" width="10.8" height="3.3" rx="0.6" fill="#c4c4c4"/></svg>
<svg class="a" style="left:2264.00px;top:1167.00px;" width="43" height="43" viewBox="2264 1167 43 43"><rect x="2266" y="1181" width="14.5" height="27" fill="#fff"/><rect x="2282.5" y="1169.5" width="22.5" height="38.5" fill="#fff"/><rect x="2268.4" y="1184" width="3.2" height="3.2" fill="#512da8"/><rect x="2274.6" y="1184" width="3.2" height="3.2" fill="#512da8"/><rect x="2268.4" y="1189.6" width="3.2" height="3.2" fill="#512da8"/><rect x="2274.6" y="1189.6" width="3.2" height="3.2" fill="#512da8"/><rect x="2268.4" y="1195.2" width="3.2" height="3.2" fill="#512da8"/><rect x="2274.6" y="1195.2" width="3.2" height="3.2" fill="#512da8"/><rect x="2268.4" y="1200.8" width="3.2" height="3.2" fill="#512da8"/><rect x="2274.6" y="1200.8" width="3.2" height="3.2" fill="#512da8"/><rect x="2285.6" y="1172.6" width="3.4" height="3.4" fill="#512da8"/><rect x="2292" y="1172.6" width="3.4" height="3.4" fill="#512da8"/><rect x="2298.4" y="1172.6" width="3.4" height="3.4" fill="#512da8"/><rect x="2285.6" y="1178.3" width="3.4" height="3.4" fill="#512da8"/><rect x="2292" y="1178.3" width="3.4" height="3.4" fill="#512da8"/><rect x="2298.4" y="1178.3" width="3.4" height="3.4" fill="#512da8"/><rect x="2285.6" y="1184" width="3.4" height="3.4" fill="#512da8"/><rect x="2292" y="1184" width="3.4" height="3.4" fill="#512da8"/><rect x="2298.4" y="1184" width="3.4" height="3.4" fill="#512da8"/><rect x="2285.6" y="1189.7" width="3.4" height="3.4" fill="#512da8"/><rect x="2292" y="1189.7" width="3.4" height="3.4" fill="#512da8"/><rect x="2298.4" y="1189.7" width="3.4" height="3.4" fill="#512da8"/><rect x="2285.6" y="1195.4" width="3.4" height="3.4" fill="#512da8"/><rect x="2292" y="1195.4" width="3.4" height="3.4" fill="#512da8"/><rect x="2298.4" y="1195.4" width="3.4" height="3.4" fill="#512da8"/><rect x="2270.4" y="1203.6" width="5.6" height="3" fill="#512da8"/><rect x="2290.4" y="1201.6" width="6.6" height="4" fill="#512da8"/></svg>
</body></html>
